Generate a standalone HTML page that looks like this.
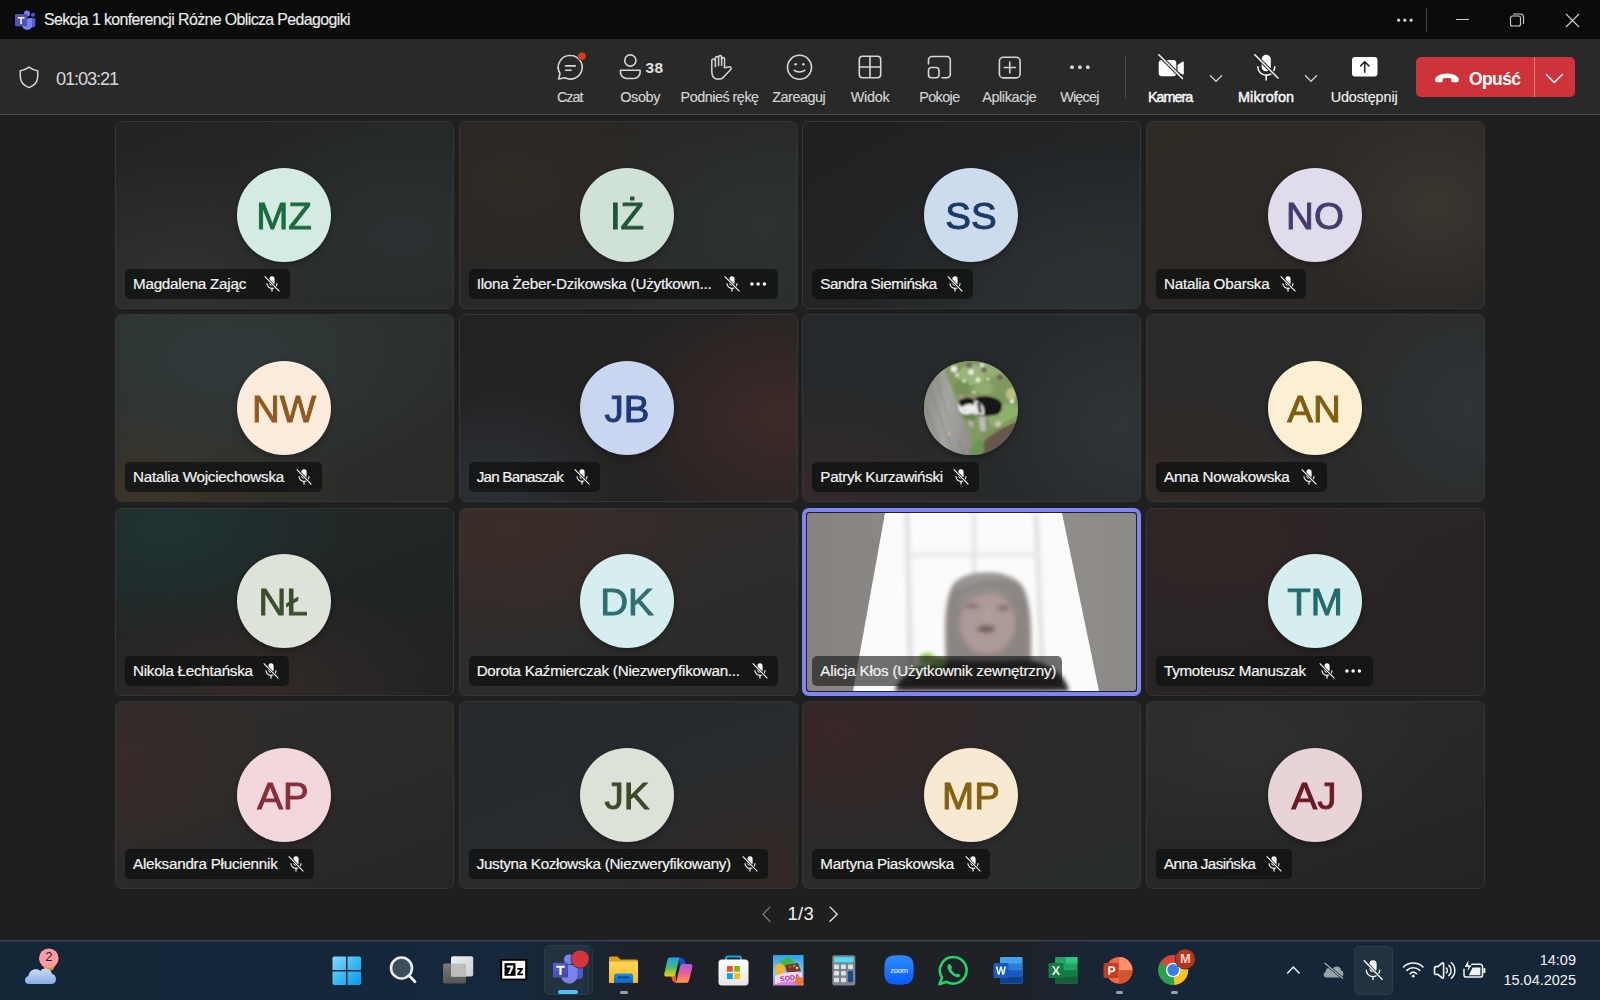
<!DOCTYPE html><html><head><meta charset="utf-8"><style>
*{margin:0;padding:0;box-sizing:border-box}
html,body{width:1600px;height:1000px;overflow:hidden;background:#1f1f1f;font-family:"Liberation Sans",sans-serif}
.a{position:absolute}
.t{white-space:nowrap;line-height:1}
svg{position:absolute;overflow:visible}
.tile{position:absolute;width:339px;height:188px;border-radius:7px;border:1px solid #353637;overflow:hidden}
.av{position:absolute;left:120.5px;top:45.5px;width:94px;height:94px;border-radius:50%;text-align:center;line-height:97px;font-size:36px;-webkit-text-stroke:0.9px currentColor;box-shadow:0 2px 6px rgba(0,0,0,.35)}
.lab{position:absolute;left:9px;top:147px;height:30px;border-radius:5px;background:rgba(16,17,17,.8);color:#f2f2f2;font-size:15.2px;line-height:30px;padding-left:8px;white-space:nowrap}
.m{display:inline-block;-webkit-text-stroke:0.2px #f2f2f2}
.tb{color:#d4d4d4;font-size:14.4px;position:absolute;top:88.5px;line-height:16px;white-space:nowrap;-webkit-text-stroke:0.15px currentColor}
</style></head><body>
<div class="a" style="left:0;top:0;width:1600px;height:39px;background:#0b0b0b"></div>
<svg style="left:14px;top:10px" width="24" height="22" viewBox="0 0 24 22">
<circle cx="19" cy="4.8" r="2.1" fill="#5059c9"/>
<path d="M16.5 8.3 H21.3 V14.8 A2.6 2.6 0 0 1 18.7 17.4 H16.5Z" fill="#5059c9"/>
<circle cx="13" cy="3.6" r="3" fill="#7b83eb"/>
<path d="M8 8.3 H18.2 V15 A5.1 5.1 0 0 1 8 15Z" fill="#7b83eb"/>
<rect x="1" y="4" width="12.2" height="12.3" rx="0.8" fill="#4b53bc"/>
<path d="M3.8 6.9 H10.4 V8.4 H7.9 V14 H6.3 V8.4 H3.8Z" fill="#fff"/>
</svg>
<div class="a t" style="left:44.00px;top:11.8px;font-size:15.9px;color:#ececec;letter-spacing:-0.600px;-webkit-text-stroke:0.15px #ececec">Sekcja 1 konferencji Różne Oblicza Pedagogiki</div>
<svg style="left:1395px;top:15px" width="22" height="10"><circle cx="3.6" cy="5.2" r="1.6" fill="#d0d0d0"/><circle cx="9.8" cy="5.2" r="1.6" fill="#d0d0d0"/><circle cx="16.1" cy="5.2" r="1.6" fill="#d0d0d0"/></svg>
<div class="a" style="left:1426px;top:8px;width:1px;height:24px;background:#4a4a4a"></div>
<div class="a" style="left:1456px;top:19px;width:13px;height:1px;background:#d0d0d0"></div>
<svg style="left:1510px;top:13px" width="15" height="14"><rect x="0.5" y="3" width="10" height="10" rx="2" fill="none" stroke="#d0d0d0" stroke-width="1.1"/><path d="M3 1 h7.5 a3 3 0 0 1 3 3 v7" fill="none" stroke="#d0d0d0" stroke-width="1.1"/></svg>
<svg style="left:1565px;top:13px" width="15" height="15"><path d="M1 1L14 14M14 1L1 14" stroke="#d0d0d0" stroke-width="1.1"/></svg>
<div class="a" style="left:0;top:39px;width:1600px;height:75px;background:#292929"></div>
<div class="a" style="left:0;top:114px;width:1600px;height:1px;background:#4e4e4e"></div>
<svg style="left:19px;top:66px" width="20" height="23" viewBox="0 0 20 23"><path d="M10 1.2 C7 3.5 4.5 4.5 1.3 4.7 V10.5 C1.3 16 4.5 19.5 10 21.6 C15.5 19.5 18.7 16 18.7 10.5 V4.7 C15.5 4.5 13 3.5 10 1.2Z" fill="none" stroke="#d8d8d8" stroke-width="1.5" stroke-linejoin="round"/></svg>
<div class="a t" style="left:56px;top:69.8px;font-size:18.3px;color:#d8d8d8;letter-spacing:-1.15px">01:03:21</div>
<svg style="left:557px;top:54px" width="27" height="27" viewBox="0 0 27 27">
<path d="M13.5 1.5 A11.8 11.8 0 1 1 8 23.8 L1.6 25 L3 19.5 A11.8 11.8 0 0 1 13.5 1.5Z" fill="none" stroke="#d6d6d6" stroke-width="1.6" stroke-linejoin="round"/>
<path d="M8.6 11.9h9.7M8.6 16.2h5.5" stroke="#d6d6d6" stroke-width="1.6" stroke-linecap="round"/>
<circle cx="25" cy="2.3" r="4.2" fill="#292929"/><circle cx="25" cy="2.3" r="3.8" fill="#dd3b1a"/>
</svg>
<div class="tb" style="left:556.95px;letter-spacing:-1.000px;">Czat</div>
<svg style="left:619px;top:54px" width="24" height="26" viewBox="0 0 24 26">
<circle cx="11.3" cy="6.5" r="5.6" fill="none" stroke="#d6d6d6" stroke-width="1.6"/>
<path d="M1.5 16.2 h19.6 v2 a6.3 6.3 0 0 1 -6.3 6.3 h-7 a6.3 6.3 0 0 1 -6.3 -6.3z" fill="none" stroke="#d6d6d6" stroke-width="1.6" stroke-linejoin="round"/>
</svg>
<div class="a t" style="left:645.5px;top:59.5px;font-size:15.5px;font-weight:bold;color:#e0e0e0;letter-spacing:0.3px">38</div>
<div class="tb" style="left:620.25px;letter-spacing:-0.350px;">Osoby</div>
<svg style="left:709px;top:54px" width="24" height="26" viewBox="0 0 24 26">
<path d="M2.8 17 V6.8 A1.8 1.8 0 0 1 6.4 6.8 V4 A1.6 1.6 0 0 1 9.6 4 V3 A1.5 1.5 0 0 1 12.6 3 V5 A1.45 1.45 0 0 1 15.5 5 V13.8 L19.6 13 A1.7 1.7 0 0 1 21.5 15.8 L14.6 23 C13.7 24.3 12.6 25 11 25 H7.6 C4.8 25 2.8 22 2.8 17 Z" fill="none" stroke="#d6d6d6" stroke-width="1.5" stroke-linejoin="round"/>
<path d="M6.4 6.8 V12.8 M9.6 4 V11.6 M12.6 3 V11.6" stroke="#d6d6d6" stroke-width="1.5" stroke-linecap="round"/>
</svg>
<div class="tb" style="left:680.58px;letter-spacing:-0.500px;">Podnieś rękę</div>
<svg style="left:786px;top:54px" width="27" height="27" viewBox="0 0 27 27">
<circle cx="13.5" cy="13.3" r="12" fill="none" stroke="#d6d6d6" stroke-width="1.6"/>
<circle cx="9.6" cy="10.3" r="1.3" fill="#d6d6d6"/><circle cx="17.4" cy="10.3" r="1.3" fill="#d6d6d6"/>
<path d="M8.3 16.4 a7 5 0 0 0 10.4 0" fill="none" stroke="#d6d6d6" stroke-width="1.6" stroke-linecap="round"/>
</svg>
<div class="tb" style="left:772.20px;letter-spacing:-0.464px;">Zareaguj</div>
<svg style="left:858px;top:55px" width="24" height="24" viewBox="0 0 24 24">
<rect x="1.3" y="1.3" width="21.4" height="21.4" rx="3.2" fill="none" stroke="#d6d6d6" stroke-width="1.6"/>
<path d="M12 1.3 V22.7 M1.3 12 H22.7" stroke="#d6d6d6" stroke-width="1.6"/>
</svg>
<div class="tb" style="left:850.80px;letter-spacing:-0.300px;">Widok</div>
<svg style="left:927px;top:55px" width="25" height="24" viewBox="0 0 25 24">
<path d="M1.5 9 V5 a3.5 3.5 0 0 1 3.5 -3.5 H19.8 a3.5 3.5 0 0 1 3.5 3.5 V19.3 a3.5 3.5 0 0 1 -3.5 3.5 H15" fill="none" stroke="#d6d6d6" stroke-width="1.6" stroke-linecap="round"/>
<rect x="1.5" y="12.5" width="10.5" height="10.3" rx="3" fill="none" stroke="#d6d6d6" stroke-width="1.6"/>
</svg>
<div class="tb" style="left:919.20px;letter-spacing:-0.600px;">Pokoje</div>
<svg style="left:998px;top:56px" width="24" height="23" viewBox="0 0 24 23">
<rect x="1.4" y="1.2" width="20.7" height="20.7" rx="4" fill="none" stroke="#d6d6d6" stroke-width="1.6"/>
<path d="M11.75 5.5 V17.5 M5.7 11.55 H17.8" stroke="#d6d6d6" stroke-width="1.6"/>
</svg>
<div class="tb" style="left:982.20px;letter-spacing:-0.375px;">Aplikacje</div>
<svg style="left:1068px;top:63px" width="24" height="8"><circle cx="4" cy="4.2" r="1.9" fill="#d6d6d6"/><circle cx="11.9" cy="4.2" r="1.9" fill="#d6d6d6"/><circle cx="19.8" cy="4.2" r="1.9" fill="#d6d6d6"/></svg>
<div class="tb" style="left:1060.20px;letter-spacing:-0.800px;">Więcej</div>
<div class="a" style="left:1125px;top:57px;width:1px;height:41px;background:#4d4d4d"></div>
<svg style="left:1157px;top:53px" width="28" height="27" viewBox="0 0 28 27">
<path d="M5 7 H16 a3.3 3.3 0 0 1 3.3 3.3 V20 a3.3 3.3 0 0 1 -3.3 3.3 H5 a3.3 3.3 0 0 1 -3.3 -3.3 V10.3 A3.3 3.3 0 0 1 5 7Z" fill="#ffffff"/>
<path d="M20.5 12 l4.8 -3.2 a1 1 0 0 1 1.5 .8 V20.6 a1 1 0 0 1 -1.5 .8 l-4.8 -3.2z" fill="#ffffff"/>
<path d="M1.8 1.8 L25.5 25.5" stroke="#292929" stroke-width="3.6"/>
<path d="M1.8 1.8 L25.5 25.5" stroke="#ffffff" stroke-width="1.5" stroke-linecap="round"/>
</svg>
<div class="tb" style="left:1147.95px;letter-spacing:-1.000px;color:#f8f8f8;-webkit-text-stroke:0.45px #f8f8f8">Kamera</div>
<svg style="left:1209px;top:74px" width="14" height="9"><path d="M1 1.2 L7 7.3 L13 1.2" fill="none" stroke="#d0d0d0" stroke-width="1.3"/></svg>
<svg style="left:1253px;top:53px" width="27" height="28" viewBox="0 0 27 28">
<rect x="8.6" y="1.8" width="9.2" height="16.5" rx="4.6" fill="#ffffff"/>
<path d="M4.8 13.7 a8.5 8.5 0 0 0 17 0" fill="none" stroke="#ffffff" stroke-width="1.5" stroke-linecap="round"/>
<path d="M13.2 22.3 V27" stroke="#ffffff" stroke-width="1.5" stroke-linecap="round"/>
<path d="M1.8 1.8 L25 25" stroke="#292929" stroke-width="3.4"/>
<path d="M1.8 1.8 L25 25" stroke="#ffffff" stroke-width="1.5" stroke-linecap="round"/>
</svg>
<div class="tb" style="left:1237.95px;letter-spacing:0.143px;color:#f8f8f8;-webkit-text-stroke:0.45px #f8f8f8">Mikrofon</div>
<svg style="left:1304px;top:74px" width="14" height="9"><path d="M1 1.2 L7 7.3 L13 1.2" fill="none" stroke="#d0d0d0" stroke-width="1.3"/></svg>
<svg style="left:1352px;top:57px" width="26" height="20" viewBox="0 0 26 20">
<rect x="0" y="0" width="25.5" height="19.5" rx="3" fill="#ffffff"/>
<path d="M12.75 15.3 V4.8 M8.6 8.9 L12.75 4.7 L16.9 8.9" fill="none" stroke="#292929" stroke-width="1.6" stroke-linecap="round" stroke-linejoin="round"/>
</svg>
<div class="tb" style="left:1330.70px;letter-spacing:-0.111px;color:#f0f0f0">Udostępnij</div>
<div class="a" style="left:1416px;top:57px;width:159px;height:40px;border-radius:5px;background:#cd3339"></div>
<div class="a" style="left:1534px;top:57px;width:1px;height:40px;background:#e07a7e"></div>
<svg style="left:1434px;top:72px" width="26" height="12" viewBox="0 0 26 12">
<path d="M1.2 8.3 C0.5 5.2 5.5 1.6 13 1.6 C20.5 1.6 25.5 5.2 24.8 8.3 C24.6 9.4 23.8 10.3 22.6 10.3 L19 10.3 C18 10.3 17.3 9.4 17.3 8.4 L17.3 6.6 C15.6 6 14.3 5.9 13 5.9 C11.7 5.9 10.4 6 8.7 6.6 L8.7 8.4 C8.7 9.4 8 10.3 7 10.3 L3.4 10.3 C2.2 10.3 1.4 9.4 1.2 8.3Z" fill="#fff"/>
</svg>
<div class="a t" style="left:1469px;top:70.5px;font-size:17.5px;font-weight:bold;color:#fff;letter-spacing:-0.6px">Opuść</div>
<svg style="left:1545px;top:73px" width="19" height="11"><path d="M1 1.2 L9.3 9.5 L17.6 1.2" fill="none" stroke="#fff" stroke-width="1.5"/></svg>
<div class="tile" style="left:115px;top:121px;background:radial-gradient(ellipse 60% 70% at 20% 85%, #303131 0%, rgba(48,49,49,0) 100%), radial-gradient(ellipse 60% 80% at 85% 60%, #2b3132 0%, rgba(43,49,50,0) 100%), linear-gradient(160deg,#222323 0%,#272828 100%)">
<div class="av" style="background:#d3ebe0;color:#1b6b3f"><span style="display:inline-block;transform:scaleX(1.07)">MZ</span></div>
<div class="lab" style="width:164.70px"><span class="m" id="t0" style="letter-spacing:-0.233px">Magdalena Zając</span>
<svg style="left:137.80px;top:6px" width="18" height="18" viewBox="0 0 18 18"><rect x="6.4" y="1.3" width="5.2" height="9.4" rx="2.6" fill="#fff"/><path d="M3.9 8.3 a5.1 5.1 0 0 0 10.2 0" fill="none" stroke="#fff" stroke-width="1.1"/><path d="M9 13.4 V16.6" stroke="#fff" stroke-width="1.2"/><path d="M1.7 1.4 L16.4 16.3" stroke="#141414" stroke-width="2.6"/><path d="M1.7 1.4 L16.4 16.3" stroke="#fff" stroke-width="1.1"/></svg>
</div></div>
<div class="tile" style="left:458.67px;top:121px;background:radial-gradient(ellipse 60% 70% at 15% 30%, #302a25 0%, rgba(48,42,37,0) 100%), radial-gradient(ellipse 60% 80% at 90% 55%, #2d3233 0%, rgba(45,50,51,0) 100%), linear-gradient(160deg,#242322 0%,#2b2c2c 100%)">
<div class="av" style="background:#d0e2d6;color:#1f5535"><span style="display:inline-block;transform:scaleX(1.07)">IŻ</span></div>
<div class="lab" style="width:309.03px"><span class="m" id="t1" style="letter-spacing:-0.215px">Ilona Żeber-Dzikowska (Użytkown...</span>
<svg style="left:253.93px;top:6px" width="18" height="18" viewBox="0 0 18 18"><rect x="6.4" y="1.3" width="5.2" height="9.4" rx="2.6" fill="#fff"/><path d="M3.9 8.3 a5.1 5.1 0 0 0 10.2 0" fill="none" stroke="#fff" stroke-width="1.1"/><path d="M9 13.4 V16.6" stroke="#fff" stroke-width="1.2"/><path d="M1.7 1.4 L16.4 16.3" stroke="#141414" stroke-width="2.6"/><path d="M1.7 1.4 L16.4 16.3" stroke="#fff" stroke-width="1.1"/></svg>
<svg style="left:281.53px;top:13px" width="18" height="5"><circle cx="1.9" cy="2" r="1.75" fill="#fff"/><circle cx="8.1" cy="2" r="1.75" fill="#fff"/><circle cx="14.4" cy="2" r="1.75" fill="#fff"/></svg>
</div></div>
<div class="tile" style="left:802.33px;top:121px;background:radial-gradient(ellipse 70% 80% at 85% 90%, #2c3233 0%, rgba(44,50,51,0) 100%), linear-gradient(150deg,#1e2022 0%,#232527 60%,#282c2d 100%)">
<div class="av" style="background:#ccdcec;color:#1b3a66"><span style="display:inline-block;transform:scaleX(1.07)">SS</span></div>
<div class="lab" style="width:161.07px"><span class="m" id="t2" style="letter-spacing:-0.425px">Sandra Siemińska</span>
<svg style="left:134.17px;top:6px" width="18" height="18" viewBox="0 0 18 18"><rect x="6.4" y="1.3" width="5.2" height="9.4" rx="2.6" fill="#fff"/><path d="M3.9 8.3 a5.1 5.1 0 0 0 10.2 0" fill="none" stroke="#fff" stroke-width="1.1"/><path d="M9 13.4 V16.6" stroke="#fff" stroke-width="1.2"/><path d="M1.7 1.4 L16.4 16.3" stroke="#141414" stroke-width="2.6"/><path d="M1.7 1.4 L16.4 16.3" stroke="#fff" stroke-width="1.1"/></svg>
</div></div>
<div class="tile" style="left:1146px;top:121px;background:radial-gradient(ellipse 40% 60% at 85% 45%, #3a352f 0%, rgba(58,53,47,0) 100%), linear-gradient(160deg,#302a25 0%,#2d2926 60%,#2a2827 100%)">
<div class="av" style="background:#e0dcec;color:#463b6e"><span style="display:inline-block;transform:scaleX(1.07)">NO</span></div>
<div class="lab" style="width:150.00px"><span class="m" id="t3" style="letter-spacing:-0.234px">Natalia Obarska</span>
<svg style="left:123.10px;top:6px" width="18" height="18" viewBox="0 0 18 18"><rect x="6.4" y="1.3" width="5.2" height="9.4" rx="2.6" fill="#fff"/><path d="M3.9 8.3 a5.1 5.1 0 0 0 10.2 0" fill="none" stroke="#fff" stroke-width="1.1"/><path d="M9 13.4 V16.6" stroke="#fff" stroke-width="1.2"/><path d="M1.7 1.4 L16.4 16.3" stroke="#141414" stroke-width="2.6"/><path d="M1.7 1.4 L16.4 16.3" stroke="#fff" stroke-width="1.1"/></svg>
</div></div>
<div class="tile" style="left:115px;top:314.33px;background:radial-gradient(ellipse 70% 70% at 35% 25%, #30393a 0%, rgba(48,57,58,0) 100%), radial-gradient(ellipse 60% 60% at 10% 95%, #3c3428 0%, rgba(60,52,40,0) 100%), linear-gradient(160deg,#2c3230 0%,#2a2a28 100%)">
<div class="av" style="background:#fdebdb;color:#8f5a1f"><span style="display:inline-block;transform:scaleX(1.07)">NW</span></div>
<div class="lab" style="width:196.70px"><span class="m" id="t4" style="letter-spacing:-0.233px">Natalia Wojciechowska</span>
<svg style="left:169.80px;top:6px" width="18" height="18" viewBox="0 0 18 18"><rect x="6.4" y="1.3" width="5.2" height="9.4" rx="2.6" fill="#fff"/><path d="M3.9 8.3 a5.1 5.1 0 0 0 10.2 0" fill="none" stroke="#fff" stroke-width="1.1"/><path d="M9 13.4 V16.6" stroke="#fff" stroke-width="1.2"/><path d="M1.7 1.4 L16.4 16.3" stroke="#141414" stroke-width="2.6"/><path d="M1.7 1.4 L16.4 16.3" stroke="#fff" stroke-width="1.1"/></svg>
</div></div>
<div class="tile" style="left:458.67px;top:314.33px;background:radial-gradient(ellipse 50% 70% at 95% 55%, #3d2a28 0%, rgba(61,42,40,0) 100%), radial-gradient(ellipse 40% 50% at 10% 90%, #2b3038 0%, rgba(43,48,56,0) 100%), linear-gradient(160deg,#232222 0%,#262424 100%)">
<div class="av" style="background:#c9d6ef;color:#1e3975"><span style="display:inline-block;transform:scaleX(1.07)">JB</span></div>
<div class="lab" style="width:130.93px"><span class="m" id="t5" style="letter-spacing:-0.758px">Jan Banaszak</span>
<svg style="left:104.03px;top:6px" width="18" height="18" viewBox="0 0 18 18"><rect x="6.4" y="1.3" width="5.2" height="9.4" rx="2.6" fill="#fff"/><path d="M3.9 8.3 a5.1 5.1 0 0 0 10.2 0" fill="none" stroke="#fff" stroke-width="1.1"/><path d="M9 13.4 V16.6" stroke="#fff" stroke-width="1.2"/><path d="M1.7 1.4 L16.4 16.3" stroke="#141414" stroke-width="2.6"/><path d="M1.7 1.4 L16.4 16.3" stroke="#fff" stroke-width="1.1"/></svg>
</div></div>
<div class="tile" style="left:802.33px;top:314.33px;background:radial-gradient(ellipse 50% 60% at 5% 95%, #34292a 0%, rgba(52,41,42,0) 100%), radial-gradient(ellipse 40% 70% at 95% 60%, #2f3537 0%, rgba(47,53,55,0) 100%), linear-gradient(170deg,#25292b 0%,#272a2b 100%)">
<div class="av" id="cat" style="background:#6c7a58"></div>
<div class="lab" style="width:166.57px"><span class="m" id="t6" style="letter-spacing:-0.322px">Patryk Kurzawiński</span>
<svg style="left:139.67px;top:6px" width="18" height="18" viewBox="0 0 18 18"><rect x="6.4" y="1.3" width="5.2" height="9.4" rx="2.6" fill="#fff"/><path d="M3.9 8.3 a5.1 5.1 0 0 0 10.2 0" fill="none" stroke="#fff" stroke-width="1.1"/><path d="M9 13.4 V16.6" stroke="#fff" stroke-width="1.2"/><path d="M1.7 1.4 L16.4 16.3" stroke="#141414" stroke-width="2.6"/><path d="M1.7 1.4 L16.4 16.3" stroke="#fff" stroke-width="1.1"/></svg>
</div></div>
<div class="tile" style="left:1146px;top:314.33px;background:radial-gradient(ellipse 50% 60% at 5% 90%, #332a26 0%, rgba(51,42,38,0) 100%), radial-gradient(ellipse 40% 70% at 95% 50%, #2e3437 0%, rgba(46,52,55,0) 100%), linear-gradient(170deg,#2b2b2b 0%,#2b2b2b 100%)">
<div class="av" style="background:#fcf0d4;color:#7f5e10"><span style="display:inline-block;transform:scaleX(1.07)">AN</span></div>
<div class="lab" style="width:170.50px"><span class="m" id="t7" style="letter-spacing:-0.24px">Anna Nowakowska</span>
<svg style="left:143.60px;top:6px" width="18" height="18" viewBox="0 0 18 18"><rect x="6.4" y="1.3" width="5.2" height="9.4" rx="2.6" fill="#fff"/><path d="M3.9 8.3 a5.1 5.1 0 0 0 10.2 0" fill="none" stroke="#fff" stroke-width="1.1"/><path d="M9 13.4 V16.6" stroke="#fff" stroke-width="1.2"/><path d="M1.7 1.4 L16.4 16.3" stroke="#141414" stroke-width="2.6"/><path d="M1.7 1.4 L16.4 16.3" stroke="#fff" stroke-width="1.1"/></svg>
</div></div>
<div class="tile" style="left:115px;top:507.67px;background:radial-gradient(ellipse 60% 60% at 15% 10%, #1f3332 0%, rgba(31,51,50,0) 100%), radial-gradient(ellipse 60% 60% at 40% 100%, #342a28 0%, rgba(52,42,40,0) 100%), linear-gradient(160deg,#222727 0%,#212222 100%)">
<div class="av" style="background:#dde3d9;color:#3a4e2c"><span style="display:inline-block;transform:scaleX(1.07)">NŁ</span></div>
<div class="lab" style="width:163.80px"><span class="m" id="t8" style="letter-spacing:-0.258px">Nikola Łechtańska</span>
<svg style="left:136.90px;top:6px" width="18" height="18" viewBox="0 0 18 18"><rect x="6.4" y="1.3" width="5.2" height="9.4" rx="2.6" fill="#fff"/><path d="M3.9 8.3 a5.1 5.1 0 0 0 10.2 0" fill="none" stroke="#fff" stroke-width="1.1"/><path d="M9 13.4 V16.6" stroke="#fff" stroke-width="1.2"/><path d="M1.7 1.4 L16.4 16.3" stroke="#141414" stroke-width="2.6"/><path d="M1.7 1.4 L16.4 16.3" stroke="#fff" stroke-width="1.1"/></svg>
</div></div>
<div class="tile" style="left:458.67px;top:507.67px;background:radial-gradient(ellipse 60% 60% at 15% 10%, #3b2d29 0%, rgba(59,45,41,0) 100%), linear-gradient(160deg,#332c29 0%,#2d2c2c 60%,#2c2b2b 100%)">
<div class="av" style="background:#d6eef0;color:#2f6e72"><span style="display:inline-block;transform:scaleX(1.07)">DK</span></div>
<div class="lab" style="width:309.03px"><span class="m" id="t9" style="letter-spacing:-0.25px">Dorota Kaźmierczak (Niezweryfikowan...</span>
<svg style="left:282.13px;top:6px" width="18" height="18" viewBox="0 0 18 18"><rect x="6.4" y="1.3" width="5.2" height="9.4" rx="2.6" fill="#fff"/><path d="M3.9 8.3 a5.1 5.1 0 0 0 10.2 0" fill="none" stroke="#fff" stroke-width="1.1"/><path d="M9 13.4 V16.6" stroke="#fff" stroke-width="1.2"/><path d="M1.7 1.4 L16.4 16.3" stroke="#141414" stroke-width="2.6"/><path d="M1.7 1.4 L16.4 16.3" stroke="#fff" stroke-width="1.1"/></svg>
</div></div>
<div class="tile" id="vid" style="left:802.33px;top:507.67px;width:339px;height:188px;border:4px solid #7f85f5;border-radius:7px;background:#202020"></div>
<div class="tile" style="left:1146px;top:507.67px;background:radial-gradient(ellipse 60% 60% at 20% 20%, #302626 0%, rgba(48,38,38,0) 100%), linear-gradient(160deg,#2c2626 0%,#262323 100%)">
<div class="av" style="background:#d6eef0;color:#236b6c"><span style="display:inline-block;transform:scaleX(1.07)">TM</span></div>
<div class="lab" style="width:216.80px"><span class="m" id="t11" style="letter-spacing:-0.283px">Tymoteusz Manuszak</span>
<svg style="left:161.70px;top:6px" width="18" height="18" viewBox="0 0 18 18"><rect x="6.4" y="1.3" width="5.2" height="9.4" rx="2.6" fill="#fff"/><path d="M3.9 8.3 a5.1 5.1 0 0 0 10.2 0" fill="none" stroke="#fff" stroke-width="1.1"/><path d="M9 13.4 V16.6" stroke="#fff" stroke-width="1.2"/><path d="M1.7 1.4 L16.4 16.3" stroke="#141414" stroke-width="2.6"/><path d="M1.7 1.4 L16.4 16.3" stroke="#fff" stroke-width="1.1"/></svg>
<svg style="left:189.30px;top:13px" width="18" height="5"><circle cx="1.9" cy="2" r="1.75" fill="#fff"/><circle cx="8.1" cy="2" r="1.75" fill="#fff"/><circle cx="14.4" cy="2" r="1.75" fill="#fff"/></svg>
</div></div>
<div class="tile" style="left:115px;top:701px;background:radial-gradient(ellipse 40% 60% at 5% 35%, #372b29 0%, rgba(55,43,41,0) 100%), linear-gradient(160deg,#302d2b 0%,#2c2b2a 50%,#272626 100%)">
<div class="av" style="background:#f2d8dc;color:#872e3b"><span style="display:inline-block;transform:scaleX(1.07)">AP</span></div>
<div class="lab" style="width:189.00px"><span class="m" id="t12" style="letter-spacing:-0.233px">Aleksandra Płuciennik</span>
<svg style="left:162.10px;top:6px" width="18" height="18" viewBox="0 0 18 18"><rect x="6.4" y="1.3" width="5.2" height="9.4" rx="2.6" fill="#fff"/><path d="M3.9 8.3 a5.1 5.1 0 0 0 10.2 0" fill="none" stroke="#fff" stroke-width="1.1"/><path d="M9 13.4 V16.6" stroke="#fff" stroke-width="1.2"/><path d="M1.7 1.4 L16.4 16.3" stroke="#141414" stroke-width="2.6"/><path d="M1.7 1.4 L16.4 16.3" stroke="#fff" stroke-width="1.1"/></svg>
</div></div>
<div class="tile" style="left:458.67px;top:701px;background:radial-gradient(ellipse 50% 60% at 95% 90%, #322826 0%, rgba(50,40,38,0) 100%), linear-gradient(160deg,#262a2e 0%,#292b2d 60%,#2a2928 100%)">
<div class="av" style="background:#dde2d8;color:#3c4a2a"><span style="display:inline-block;transform:scaleX(1.07)">JK</span></div>
<div class="lab" style="width:299.13px"><span class="m" id="t13" style="letter-spacing:-0.3px">Justyna Kozłowska (Niezweryfikowany)</span>
<svg style="left:272.23px;top:6px" width="18" height="18" viewBox="0 0 18 18"><rect x="6.4" y="1.3" width="5.2" height="9.4" rx="2.6" fill="#fff"/><path d="M3.9 8.3 a5.1 5.1 0 0 0 10.2 0" fill="none" stroke="#fff" stroke-width="1.1"/><path d="M9 13.4 V16.6" stroke="#fff" stroke-width="1.2"/><path d="M1.7 1.4 L16.4 16.3" stroke="#141414" stroke-width="2.6"/><path d="M1.7 1.4 L16.4 16.3" stroke="#fff" stroke-width="1.1"/></svg>
</div></div>
<div class="tile" style="left:802.33px;top:701px;background:radial-gradient(ellipse 60% 70% at 10% 15%, #382727 0%, rgba(56,39,39,0) 100%), linear-gradient(160deg,#2e2828 0%,#2b2c2c 60%,#2a2d2d 100%)">
<div class="av" style="background:#f8ead2;color:#84600f"><span style="display:inline-block;transform:scaleX(1.07)">MP</span></div>
<div class="lab" style="width:178.17px"><span class="m" id="t14" style="letter-spacing:-0.311px">Martyna Piaskowska</span>
<svg style="left:151.27px;top:6px" width="18" height="18" viewBox="0 0 18 18"><rect x="6.4" y="1.3" width="5.2" height="9.4" rx="2.6" fill="#fff"/><path d="M3.9 8.3 a5.1 5.1 0 0 0 10.2 0" fill="none" stroke="#fff" stroke-width="1.1"/><path d="M9 13.4 V16.6" stroke="#fff" stroke-width="1.2"/><path d="M1.7 1.4 L16.4 16.3" stroke="#141414" stroke-width="2.6"/><path d="M1.7 1.4 L16.4 16.3" stroke="#fff" stroke-width="1.1"/></svg>
</div></div>
<div class="tile" style="left:1146px;top:701px;background:radial-gradient(ellipse 60% 60% at 30% 20%, #2e3130 0%, rgba(46,49,48,0) 100%), linear-gradient(160deg,#2a2c2c 0%,#262727 60%,#222323 100%)">
<div class="av" style="background:#e8d3d6;color:#6b1a24"><span style="display:inline-block;transform:scaleX(1.07)">AJ</span></div>
<div class="lab" style="width:136.30px"><span class="m" id="t15" style="letter-spacing:-0.577px">Anna Jasińska</span>
<svg style="left:109.40px;top:6px" width="18" height="18" viewBox="0 0 18 18"><rect x="6.4" y="1.3" width="5.2" height="9.4" rx="2.6" fill="#fff"/><path d="M3.9 8.3 a5.1 5.1 0 0 0 10.2 0" fill="none" stroke="#fff" stroke-width="1.1"/><path d="M9 13.4 V16.6" stroke="#fff" stroke-width="1.2"/><path d="M1.7 1.4 L16.4 16.3" stroke="#141414" stroke-width="2.6"/><path d="M1.7 1.4 L16.4 16.3" stroke="#fff" stroke-width="1.1"/></svg>
</div></div>
<svg style="left:807.33px;top:512.67px" width="329" height="178" viewBox="0 0 329 178">
<defs>
<clipPath id="vc"><rect x="0" y="0" width="329" height="178" rx="3"/></clipPath>
<linearGradient id="wl" x1="0" y1="0" x2="1" y2="0"><stop offset="0" stop-color="#868380"/><stop offset="1" stop-color="#918e8a"/></linearGradient>
<linearGradient id="wr" x1="0" y1="0" x2="1" y2="0"><stop offset="0" stop-color="#95928e"/><stop offset="1" stop-color="#8c8a86"/></linearGradient>
<filter id="bl" x="-20%" y="-20%" width="140%" height="140%"><feGaussianBlur stdDeviation="2"/></filter>
</defs>
<g clip-path="url(#vc)">
<rect x="0" y="0" width="180" height="178" fill="url(#wl)"/>
<rect x="160" y="0" width="169" height="178" fill="url(#wr)"/>
<path d="M78 0 H255 L292 178 H46 Z" fill="#fbfbfb"/>
<g filter="url(#bl)" opacity="0.9">
<path d="M100 0 L104 178" stroke="#dcdcdc" stroke-width="5"/>
<path d="M229 0 L236 178" stroke="#dedede" stroke-width="5"/>
<path d="M104 42 H232" stroke="#e4e4e4" stroke-width="4"/>
<path d="M167 0 V70" stroke="#e0e0e0" stroke-width="4"/>
</g>
<g filter="url(#bl)">
<path d="M139 150 C 138 120 136 90 146 72 C 156 56 204 54 216 74 C 226 94 224 125 224 150 Z" fill="#8c8683"/>
<path d="M150 70 C 162 58 200 57 212 72 C 200 66 170 64 150 78 Z" fill="#9a9592"/>
<ellipse cx="180.5" cy="110" rx="28" ry="31" fill="#ad9995"/>
<path d="M152 84 C 165 70 200 70 210 86 C 198 78 170 76 152 96 Z" fill="#928c89"/>
<ellipse cx="165" cy="93" rx="7" ry="2.6" fill="#7e6e6c"/><ellipse cx="196" cy="95" rx="7" ry="2.6" fill="#7e6e6c"/>
<ellipse cx="181" cy="101" rx="3" ry="6" fill="#b5a5a0"/>
<ellipse cx="179" cy="116" rx="9" ry="3.6" fill="#6a5a58"/>
<path d="M88 178 C 92 160 118 150 148 146 C 168 148 196 148 216 146 C 242 150 258 160 262 178 Z" fill="#2c2627"/>
</g>
<g filter="url(#bl)"><ellipse cx="120" cy="146" rx="8" ry="6" fill="#8cc04a"/><ellipse cx="132" cy="150" rx="7" ry="5" fill="#78b040"/><ellipse cx="112" cy="158" rx="6" ry="4" fill="#6a9a3a"/></g>
</g>
</svg>
<div class="a" style="left:812.33px;top:655.67px;width:249.67px;height:30px;border-radius:5px;background:rgba(22,22,22,.62)"></div>
<div class="a t m" id="t10" style="left:820.33px;top:662.67px;font-size:15.2px;color:#f2f2f2;letter-spacing:-0.18px">Alicja Kłos (Użytkownik zewnętrzny)</div>
<svg style="left:924.33px;top:361.33px" width="94" height="94" viewBox="0 0 94 94">
<defs><clipPath id="cc"><circle cx="47" cy="47" r="47"/></clipPath>
<filter id="cb" x="-10%" y="-10%" width="120%" height="120%"><feGaussianBlur stdDeviation="1"/><feColorMatrix type="saturate" values="0.8"/></filter>
<linearGradient id="tr" x1="0" y1="0" x2="1" y2="0.2"><stop offset="0" stop-color="#85837c"/><stop offset="0.55" stop-color="#a6a59f"/><stop offset="1" stop-color="#908e88"/></linearGradient></defs>
<g clip-path="url(#cc)"><g filter="url(#cb)">
<rect x="-5" y="-5" width="104" height="104" fill="#7c9c50"/>
<ellipse cx="48" cy="14" rx="14" ry="10" fill="#96b86a"/>
<ellipse cx="70" cy="8" rx="14" ry="8" fill="#8db060"/>
<ellipse cx="80" cy="30" rx="10" ry="12" fill="#7a9a48"/>
<ellipse cx="38" cy="27" rx="8" ry="8" fill="#6e9440"/>
<ellipse cx="60" cy="27" rx="9" ry="7" fill="#88ae58"/>
<circle cx="30" cy="8" r="3.2" fill="#e8f0dc"/><circle cx="33" cy="14" r="2" fill="#d8e6c4"/><circle cx="47" cy="11" r="2.6" fill="#eef4e4"/><circle cx="54" cy="19" r="2.4" fill="#e6f0d8"/>
<circle cx="40" cy="20" r="1.8" fill="#d4e4bc"/><circle cx="50" cy="31" r="1.6" fill="#d8e8c4"/><circle cx="64" cy="18" r="1.6" fill="#dcecc8"/><circle cx="58" cy="4" r="2" fill="#e8f0e0"/>
<circle cx="88" cy="40" r="2.2" fill="#f0f6ea"/><circle cx="86" cy="48" r="1.7" fill="#eef6e8"/>
<circle cx="45" cy="4" r="3" fill="#7a6a58"/><circle cx="60" cy="9" r="2.5" fill="#6a6050"/><circle cx="76" cy="16" r="2.8" fill="#6a6048"/>
<ellipse cx="87" cy="33" rx="5" ry="6" fill="#c4c070"/>
<ellipse cx="80" cy="55" rx="16" ry="11" fill="#86b450" transform="rotate(-25 80 55)"/>
<path d="M-5 20 L21 8.5 C 32 40 44 70 53 96 H-5 Z" fill="url(#tr)"/>
<path d="M6 26 C 12 45 20 70 30 92 M13 18 C 20 45 30 70 40 94 M2 45 C 8 60 12 75 20 94" stroke="#7c7a74" stroke-width="1.5" opacity="0.5" fill="none"/>
<path d="M18 30 C 22 45 28 62 34 80" stroke="#b8b6b0" stroke-width="1.4" opacity="0.5" fill="none"/>
<circle cx="25" cy="73" r="1.6" fill="#d8c860"/>
<path d="M58 95 L60 80 C 68 72 80 66 96 58 V95 Z" fill="#6a5646"/>
<path d="M57 76 C 68 70 82 62 96 55" stroke="#7a9040" stroke-width="2" fill="none"/>
<path d="M45 95 C 46 86 50 80 56 78 C 60 82 61 90 59 95 Z" fill="#5e9a3e"/>
<path d="M55 56 L61 56 L62 70 L56 70 Z" fill="#b8bcb8"/>
<path d="M45 57 L49 57 L49 66 L45 65 Z" fill="#c8a8a0"/>
<circle cx="74" cy="63" r="3" fill="#d8c0b8"/>
<path d="M34 51 C 40 50 48 52 52 56 L 50 60 C 44 60 38 56 34 51Z" fill="#5a8a30"/>
<path d="M50 37 C 58 34 70 35 76 40 C 80 44 78 52 72 54 C 64 55 56 55 50 53 Z" fill="#141414"/>
<path d="M49 40 C 54 39 58 42 60 48 L 60 54 L 49 53 Z" fill="#e6e6e6"/>
<path d="M53 42 L56 41 L58 52 L55 52Z" fill="#222"/>
<path d="M34.5 41 C 37 36 46 35 50.5 38.5 C 51 44 50.5 49 48.5 52 C 44 54 38 54 36 51 C 34.5 48 34 44 34.5 41 Z" fill="#ececec"/>
<path d="M34.5 41 C 37 36 46 35 50.5 38.5 L 50 44 C 46 42 41 43 38 46 C 36 45 35 43 34.5 41Z" fill="#151515"/>
<path d="M35 38 L36.5 32 L41 37 Z" fill="#b89088"/><path d="M47 37 L51 33 L52 40 Z" fill="#a88078"/>
<circle cx="40.5" cy="49.5" r="1" fill="#d08888"/>
</g></g></svg>
<svg style="left:761px;top:905px" width="12" height="18"><path d="M9.3 1.6 L2 9.2 L9.3 16.8" fill="none" stroke="#7a7a7a" stroke-width="1.3"/></svg>
<div class="a t" style="left:787.5px;top:904.5px;font-size:18.5px;color:#f0f0f0;letter-spacing:0.3px">1/3</div>
<svg style="left:828px;top:905px" width="12" height="18"><path d="M1.6 1.6 L9.2 9.2 L1.6 16.8" fill="none" stroke="#e8e8e8" stroke-width="1.3"/></svg>
<div class="a" style="left:0;top:940px;width:1600px;height:60px;background:linear-gradient(90deg,#132739 0%,#15273a 33%,#1d2127 41%,#1e2125 62%,#162639 71%,#142638 100%)"></div>
<div class="a" style="left:0;top:940px;width:1600px;height:1px;background:#3b4652"></div>
<div class="a" style="left:0;top:941px;width:1600px;height:1px;background:#26323d"></div>
<svg style="left:22px;top:946px" width="40" height="40" viewBox="0 0 40 40">
<defs><linearGradient id="cl" x1="0" y1="0" x2="0" y2="1"><stop offset="0" stop-color="#c9dcf5"/><stop offset="1" stop-color="#88aee8"/></linearGradient></defs>
<circle cx="27" cy="19" r="6" fill="#f08a1c"/>
<path d="M7 38 C 2 38 1.5 31 6.5 30 C 7 24 14 21 18.5 25 C 21 21 29 22 30 28 C 35 28 35.5 38 30 38 Z" fill="url(#cl)"/>
<circle cx="26.8" cy="12.3" r="9.8" fill="#ff9aa4"/>
</svg>
<div class="a t" style="left:22px;top:950px;width:53.6px;text-align:center;font-size:13px;color:#222">2</div>
<svg style="left:332px;top:956px" width="30" height="30" viewBox="0 0 30 30">
<defs><linearGradient id="wg" x1="0" y1="0" x2="1" y2="1"><stop offset="0" stop-color="#8ad8fb"/><stop offset="0.5" stop-color="#36bdf8"/><stop offset="1" stop-color="#0b94f0"/></linearGradient></defs>
<path d="M2.2 0.5 H14 V14 H0.5 V2.2 A1.7 1.7 0 0 1 2.2 0.5Z M15.5 0.5 H27.3 A1.7 1.7 0 0 1 29 2.2 V14 H15.5Z M0.5 15.5 H14 V29 H2.2 A1.7 1.7 0 0 1 0.5 27.3Z M15.5 15.5 H29 V27.3 A1.7 1.7 0 0 1 27.3 29 H15.5Z" fill="url(#wg)"/>
</svg>
<svg style="left:388px;top:955px" width="30" height="30" viewBox="0 0 30 30">
<circle cx="13.5" cy="13" r="10.5" fill="#3d4d5c" stroke="#e9eaec" stroke-width="2.6"/>
<path d="M21 20.5 L27 26.8" stroke="#e9eaec" stroke-width="2.8" stroke-linecap="round"/>
</svg>
<svg style="left:442px;top:955px" width="33" height="30" viewBox="0 0 33 30">
<defs><linearGradient id="tv1" x1="0" y1="0" x2="1" y2="1"><stop offset="0" stop-color="#ffffff"/><stop offset="1" stop-color="#dadada"/></linearGradient>
<linearGradient id="tv2" x1="0" y1="0" x2="0" y2="1"><stop offset="0" stop-color="#7a7a7a"/><stop offset="1" stop-color="#555"/></linearGradient></defs>
<rect x="1" y="8.6" width="23" height="20" rx="2" fill="url(#tv2)"/>
<rect x="9" y="1.3" width="22.2" height="20.3" rx="2" fill="url(#tv1)" opacity="0.93"/>
<rect x="9" y="8.6" width="15" height="13" fill="#b9b9b9" opacity="0.9"/>
</svg>
<svg style="left:499.5px;top:959.3px" width="28" height="22" viewBox="0 0 28 22">
<rect x="0" y="0" width="27.2" height="21.3" fill="#000"/>
<rect x="2.2" y="1.8" width="23" height="17.8" fill="#fff"/>
<rect x="4.5" y="4.2" width="11" height="12.6" fill="#000"/>
<path d="M6.8 6.6 H13.3 V8.6 L10.3 15 H8 L11 8.6 H6.8Z" fill="#fff"/>
<path d="M17.4 9 H22.8 V10.6 L19.8 14.5 H23 V16.3 H17.2 V14.7 L20.2 10.8 H17.4Z" fill="#000"/>
</svg>
<div class="a" style="left:548px;top:945px;width:45px;height:50px;border-radius:6px;background:#1e2c39;border:1px solid #2a3945"></div>
<div class="a" style="left:543.5px;top:945px;width:45px;height:50px;border-radius:6px;background:#223240;border:1px solid #2d3d4a"></div>
<svg style="left:552px;top:948px" width="40" height="38" viewBox="0 0 40 38">
<defs><linearGradient id="tg" x1="0" y1="0" x2="1" y2="1"><stop offset="0" stop-color="#5b63d3"/><stop offset="1" stop-color="#3d44a8"/></linearGradient></defs>
<circle cx="28.5" cy="13" r="3.5" fill="#5059c9"/>
<path d="M24 18 H31 V27 A4 4 0 0 1 27 31 H24Z" fill="#5059c9"/>
<circle cx="17" cy="11.4" r="5" fill="#7b83eb"/>
<path d="M9 17 H25.5 V27.5 A8 8 0 0 1 9 27.5Z" fill="#7b83eb"/>
<rect x="1" y="14.8" width="15" height="14.7" rx="1" fill="url(#tg)"/>
<path d="M4.3 17.8 H12.7 V19.7 H9.6 V27 H7.4 V19.7 H4.3Z" fill="#fff"/>
<circle cx="28" cy="11" r="9.4" fill="#223240"/>
<circle cx="28" cy="11" r="8.8" fill="#d3353b"/>
</svg>
<div class="a" style="left:558px;top:990px;width:20px;height:4px;border-radius:2px;background:#4cc2ff"></div>
<svg style="left:607.5px;top:956px" width="31" height="28" viewBox="0 0 31 28">
<defs><linearGradient id="fy" x1="0" y1="0" x2="0" y2="1"><stop offset="0" stop-color="#ffd75e"/><stop offset="1" stop-color="#f9bb1a"/></linearGradient>
<linearGradient id="fb" x1="0" y1="0" x2="0" y2="1"><stop offset="0" stop-color="#1a8ee8"/><stop offset="1" stop-color="#0a63c6"/></linearGradient></defs>
<path d="M1 2 A1.5 1.5 0 0 1 2.5 0.5 H9.5 L12.5 3.5 H28.5 A1.5 1.5 0 0 1 30 5 V8 H1Z" fill="#e0a10f"/>
<path d="M1 5.5 H28.5 A1.5 1.5 0 0 1 30 7 V27 H1Z" fill="url(#fy)"/>
<path d="M6 27 V20 A2.5 2.5 0 0 1 8.5 17.5 H22.5 A2.5 2.5 0 0 1 25 20 V27Z" fill="url(#fb)"/>
<rect x="10" y="20.5" width="11" height="1.6" fill="#0b3f7a"/>
</svg>
<div class="a" style="left:620px;top:990.5px;width:7.5px;height:3.5px;border-radius:2px;background:#9aa0a6"></div>
<svg style="left:663px;top:956px" width="30" height="28" viewBox="0 0 30 28">
<defs><linearGradient id="cp1" x1="0" y1="0" x2="0" y2="1"><stop offset="0" stop-color="#18a4f4"/><stop offset="0.5" stop-color="#44b87a"/><stop offset="1" stop-color="#f2d600"/></linearGradient>
<linearGradient id="cp2" x1="0" y1="0" x2="0" y2="1"><stop offset="0" stop-color="#a85ae8"/><stop offset="0.5" stop-color="#ee5c94"/><stop offset="1" stop-color="#ffa044"/></linearGradient></defs>
<path d="M16 1.4 C19 1.4 21 2.5 22 5 L23 8.5 H17 Z" fill="#1a4cd0"/>
<path d="M8 19 H12.5 L13.5 26.8 C11 26.8 9.5 25.5 9 23.5Z" fill="#f0582a"/>
<path d="M19.5 8 H27.5 C29 8 29.8 9.5 29.4 11 L26 24.5 C25.6 26 24.6 26.8 23 26.8 H13 L17 10.5 C17.4 9 18 8 19.5 8Z" fill="url(#cp2)"/>
<path d="M6.8 1.4 H16.5 L12.3 18.8 C11.9 20 11 20.6 9.8 20.6 H3.2 C1.8 20.6 1 19.4 1.3 18 L4.5 3.6 C4.9 2.2 5.6 1.4 6.8 1.4Z" fill="url(#cp1)"/>
</svg>
<svg style="left:717.5px;top:955px" width="31" height="31" viewBox="0 0 31 31">
<defs><linearGradient id="sg" x1="0" y1="0" x2="0" y2="1"><stop offset="0" stop-color="#fff"/><stop offset="1" stop-color="#e6e6e6"/></linearGradient></defs>
<path d="M8 9 V3.5 A2 2 0 0 1 10 1.5 H21 A2 2 0 0 1 23 3.5 V9" fill="none" stroke="#1aa0e8" stroke-width="2"/>
<rect x="0.5" y="4.5" width="30" height="26" rx="3.5" fill="url(#sg)"/>
<rect x="9" y="11" width="5.8" height="5.8" fill="#f25022"/><rect x="16.2" y="11" width="5.8" height="5.8" fill="#7fba00"/>
<rect x="9" y="18.2" width="5.8" height="5.8" fill="#00a4ef"/><rect x="16.2" y="18.2" width="5.8" height="5.8" fill="#ffb900"/>
</svg>
<svg style="left:773px;top:955px" width="31" height="31" viewBox="0 0 31 31">
<defs><linearGradient id="cc1" x1="0" y1="0" x2="0" y2="1"><stop offset="0" stop-color="#2aa5e8"/><stop offset="0.6" stop-color="#8ac8f0"/><stop offset="1" stop-color="#e07ad8"/></linearGradient></defs>
<rect x="0" y="0" width="30.5" height="30.5" fill="url(#cc1)"/>
<path d="M6 6 L16 2 L22 8 L14 13 Z" fill="#3cb84a"/>
<path d="M2 12 C 4 7 10 8 12 12 L10 20 L3 20Z" fill="#f6b531"/>
<path d="M12 10 L25 8 L28 16 L14 18Z" fill="#7a3a2a"/>
<circle cx="17" cy="12" r="1.3" fill="#e33"/><circle cx="21" cy="11" r="1.2" fill="#3ae"/><circle cx="24" cy="13" r="1.2" fill="#fd3"/>
<path d="M2 21 C 10 17 22 16 29 18 L29 26 C 20 25 10 26 2 29Z" fill="#f1d8f0"/>
<text x="7" y="25.5" font-family="Liberation Sans" font-size="7" font-weight="bold" fill="#b0269a" transform="rotate(-8 15 24)">SODA</text>
<circle cx="26" cy="26" r="4" fill="#f27a1a"/>
</svg>
<svg style="left:831.5px;top:954.5px" width="24" height="31" viewBox="0 0 24 31">
<rect x="0.3" y="0.3" width="23" height="30.2" rx="2" fill="#7c8691"/>
<rect x="2" y="2.2" width="19.5" height="5" rx="0.8" fill="#4ee0f8"/>
<g fill="#dde1e6"><rect x="2" y="9.5" width="5" height="4.5" rx="1"/><rect x="9" y="9.5" width="5" height="4.5" rx="1"/><rect x="16" y="9.5" width="5" height="4.5" rx="1"/>
<rect x="2" y="16" width="5" height="4.5" rx="1"/><rect x="9" y="16" width="5" height="4.5" rx="1"/>
<rect x="2" y="22.7" width="5" height="4.5" rx="1"/><rect x="9" y="22.7" width="5" height="4.5" rx="1"/></g>
<rect x="16" y="16" width="5" height="11.3" rx="1" fill="#1d4a8f"/>
</svg>
<svg style="left:883.5px;top:955px" width="30" height="30" viewBox="0 0 30 30">
<defs><linearGradient id="zg" x1="0" y1="0" x2="0" y2="1"><stop offset="0" stop-color="#2d8cff"/><stop offset="1" stop-color="#0b5cff"/></linearGradient></defs>
<path d="M15 0.3 C 27 0.3 29.7 3 29.7 15 C 29.7 27 27 29.7 15 29.7 C 3 29.7 0.3 27 0.3 15 C 0.3 3 3 0.3 15 0.3Z" fill="url(#zg)"/>
<text x="15" y="17.6" text-anchor="middle" font-family="Liberation Sans" font-size="7.4" fill="#fff" letter-spacing="-0.2">zoom</text>
</svg>
<svg style="left:937.5px;top:954.5px" width="31" height="31" viewBox="0 0 31 31">
<path d="M15.5 2 A13.3 13.3 0 1 1 8.6 26.8 L1.5 29.3 L4 22.4 A13.3 13.3 0 0 1 15.5 2Z" fill="none" stroke="#25d366" stroke-width="2.6" stroke-linejoin="round"/>
<path d="M10.5 9 C 9.2 10.5 9 12.5 10.3 15 C 12 18 14.5 20.5 17.5 21.8 C 19.8 22.8 21.5 22.2 22.5 20.8 L 20.2 18.5 L 18.3 19.3 C 16.3 18.5 14 16.2 13.2 14.3 L 14.2 12.3 L 12 9.2 Z" fill="#25d366"/>
</svg>
<svg style="left:993px;top:956.5px" width="30" height="27" viewBox="0 0 30 27">
<rect x="7" y="0" width="22.5" height="26.5" rx="1.2" fill="#41a5ee"/>
<rect x="7" y="6.6" width="22.5" height="6.6" fill="#2b7cd3"/>
<rect x="7" y="13.2" width="22.5" height="6.6" fill="#185abd"/>
<path d="M7 19.8 H29.5 V25.3 A1.2 1.2 0 0 1 28.3 26.5 H8.2 A1.2 1.2 0 0 1 7 25.3Z" fill="#103f91"/>
<rect x="0.5" y="6" width="15" height="15" rx="1.2" fill="#185abd"/>
<path d="M2.8 9.5 H4.6 L5.8 15.5 L7.1 9.5 H8.8 L10.1 15.5 L11.3 9.5 H13 L11 17.7 H9.3 L7.95 12 L6.6 17.7 H4.9Z" fill="#fff"/>
</svg>
<svg style="left:1048px;top:956.5px" width="30" height="27" viewBox="0 0 30 27">
<rect x="7" y="0" width="22.5" height="26.5" rx="1.2" fill="#21a366"/>
<rect x="18" y="0" width="11.5" height="6.6" fill="#33c481"/>
<rect x="7" y="13.2" width="22.5" height="6.6" fill="#107c41"/>
<path d="M7 19.8 H29.5 V25.3 A1.2 1.2 0 0 1 28.3 26.5 H8.2 A1.2 1.2 0 0 1 7 25.3Z" fill="#185c37"/>
<rect x="0.5" y="6" width="15" height="15" rx="1.2" fill="#107c41"/>
<path d="M4 9.3 H6.2 L8 12.6 L9.8 9.3 H12 L9.2 13.5 L12.1 17.7 H9.9 L8 14.4 L6.1 17.7 H3.9 L6.8 13.5Z" fill="#fff"/>
</svg>
<svg style="left:1103px;top:956.5px" width="30" height="27" viewBox="0 0 30 27">
<circle cx="16.2" cy="13.3" r="13.3" fill="#ed6c47"/>
<path d="M16.2 0 A13.3 13.3 0 0 1 29.5 13.3 H16.2Z" fill="#ff8f6b"/>
<path d="M16.2 13.3 H29.5 A13.3 13.3 0 0 1 16.2 26.6Z" fill="#d35230"/>
<rect x="0.5" y="6" width="15" height="15" rx="1.2" fill="#c43e1c"/>
<path d="M5.2 9.3 H9 C 11.2 9.3 12.3 10.5 12.3 12.3 C 12.3 14.2 11 15.3 9 15.3 H7.2 V17.7 H5.2Z M7.2 11 V13.6 H8.8 C 9.8 13.6 10.3 13.1 10.3 12.3 C 10.3 11.5 9.8 11 8.8 11Z" fill="#fff"/>
</svg>
<div class="a" style="left:1115.5px;top:990.5px;width:7px;height:3.5px;border-radius:2px;background:#9aa0a6"></div>
<svg style="left:1157px;top:948px" width="40" height="40" viewBox="0 0 40 40">
<circle cx="16.2" cy="22" r="15" fill="#db4437"/>
<path d="M16.2 22 L3.2 14.5 A15 15 0 0 0 17.5 37 Z" fill="#27a14a"/>
<path d="M16.2 22 L17.5 37 A15 15 0 0 0 29.2 14.5 Z" fill="#fbc51a"/>
<circle cx="16.2" cy="22" r="7.3" fill="#fff"/>
<circle cx="16.2" cy="22" r="5.9" fill="#3b7ee8"/>
<circle cx="28.2" cy="11" r="10.4" fill="#1b2a36"/>
<circle cx="28.2" cy="11" r="9.8" fill="#b7361a"/>
</svg>
<div class="a t" style="left:1174.5px;top:952px;width:22px;text-align:center;font-size:13px;font-weight:bold;color:#f6d8d0">M</div>
<div class="a" style="left:1170.5px;top:990.5px;width:7px;height:3.5px;border-radius:2px;background:#9aa0a6"></div>
<svg style="left:1286px;top:965px" width="15" height="10"><path d="M1.2 8.5 L7.3 2 L13.5 8.5" fill="none" stroke="#eef0f2" stroke-width="1.5"/></svg>
<svg style="left:1322px;top:962px" width="23" height="17" viewBox="0 0 23 17">
<path d="M4.5 15.5 C 1.5 15.5 0.5 11 3.5 10 C 3.5 6 8 4 11 6.5 C 13 3 19 4 19 8.5 C 22 8.5 22.5 15.5 18.5 15.5Z" fill="#9aa3ad"/>
<path d="M2.5 1 L21 16.5" stroke="#1a2633" stroke-width="2.6"/><path d="M2.5 1 L21 16.5" stroke="#aab2bb" stroke-width="1.2"/>
</svg>
<div class="a" style="left:1353.5px;top:945.5px;width:39px;height:49px;border-radius:5px;background:#223240;border:1px solid #2e3d4a"></div>
<svg style="left:1362px;top:959px" width="22" height="22" viewBox="0 0 22 22">
<rect x="7.4" y="1.2" width="7.2" height="12" rx="3.6" fill="#fff"/>
<path d="M4.2 10.8 a6.8 6.8 0 0 0 13.6 0" fill="none" stroke="#fff" stroke-width="1.3"/>
<path d="M11 17.6 V21" stroke="#fff" stroke-width="1.3"/>
<path d="M1.8 1.3 L20.5 20.8" stroke="#223240" stroke-width="3"/><path d="M1.8 1.3 L20.5 20.8" stroke="#fff" stroke-width="1.3"/>
</svg>
<svg style="left:1402px;top:961px" width="23" height="17" viewBox="0 0 23 17">
<path d="M1.5 6 A14 14 0 0 1 21 6" fill="none" stroke="#f2f2f2" stroke-width="1.6" stroke-linecap="round"/>
<path d="M4.8 9.3 A9.5 9.5 0 0 1 17.8 9.3" fill="none" stroke="#f2f2f2" stroke-width="1.6" stroke-linecap="round"/>
<path d="M8.2 12.6 A4.6 4.6 0 0 1 14.4 12.6" fill="none" stroke="#f2f2f2" stroke-width="1.6" stroke-linecap="round"/>
<circle cx="11.3" cy="15.2" r="1.4" fill="#f2f2f2"/>
</svg>
<svg style="left:1432.5px;top:960.5px" width="23" height="19" viewBox="0 0 23 19">
<path d="M1.5 6.8 A1.2 1.2 0 0 1 2.7 5.6 H4.8 L9.4 2 A0.8 0.8 0 0 1 10.6 2.6 V16.4 A0.8 0.8 0 0 1 9.4 17 L4.8 13.4 H2.7 A1.2 1.2 0 0 1 1.5 12.2Z" fill="none" stroke="#f2f2f2" stroke-width="1.6" stroke-linejoin="round"/>
<path d="M13.2 7 A3.2 3.2 0 0 1 13.2 12" fill="none" stroke="#f2f2f2" stroke-width="1.5" stroke-linecap="round"/>
<path d="M15.8 4.4 A6.8 6.8 0 0 1 15.8 14.6" fill="none" stroke="#f2f2f2" stroke-width="1.5" stroke-linecap="round"/>
<path d="M18.4 1.8 A10.4 10.4 0 0 1 18.4 17.2" fill="none" stroke="#f2f2f2" stroke-width="1.5" stroke-linecap="round"/>
</svg>
<svg style="left:1462.5px;top:959.5px" width="24" height="19" viewBox="0 0 24 19">
<path d="M8.8 4.2 H17.3 A2.2 2.2 0 0 1 19.5 6.4 V14.9 A2.2 2.2 0 0 1 17.3 17.1 H3.2 A2.2 2.2 0 0 1 1 14.9 V9.2" fill="none" stroke="#f2f2f2" stroke-width="1.5" stroke-linecap="round"/>
<rect x="20.3" y="8.1" width="2.1" height="5" rx="0.9" fill="#f2f2f2"/>
<path d="M5.4 0.6 L1.7 6.9 H5.4 L4.3 11.6 L8.6 5.3 H5.2 Z" fill="#f2f2f2"/>
<path d="M5.8 15.3 L9.6 7.4 H17.4 V15.3 Z" fill="#f2f2f2"/>
</svg>
<div class="a t" style="left:1500px;top:953px;width:76px;text-align:right;font-size:14.5px;color:#f4f4f4">14:09</div>
<div class="a t" style="left:1500px;top:972.5px;width:76px;text-align:right;font-size:14.5px;color:#f4f4f4">15.04.2025</div>
</body></html>
